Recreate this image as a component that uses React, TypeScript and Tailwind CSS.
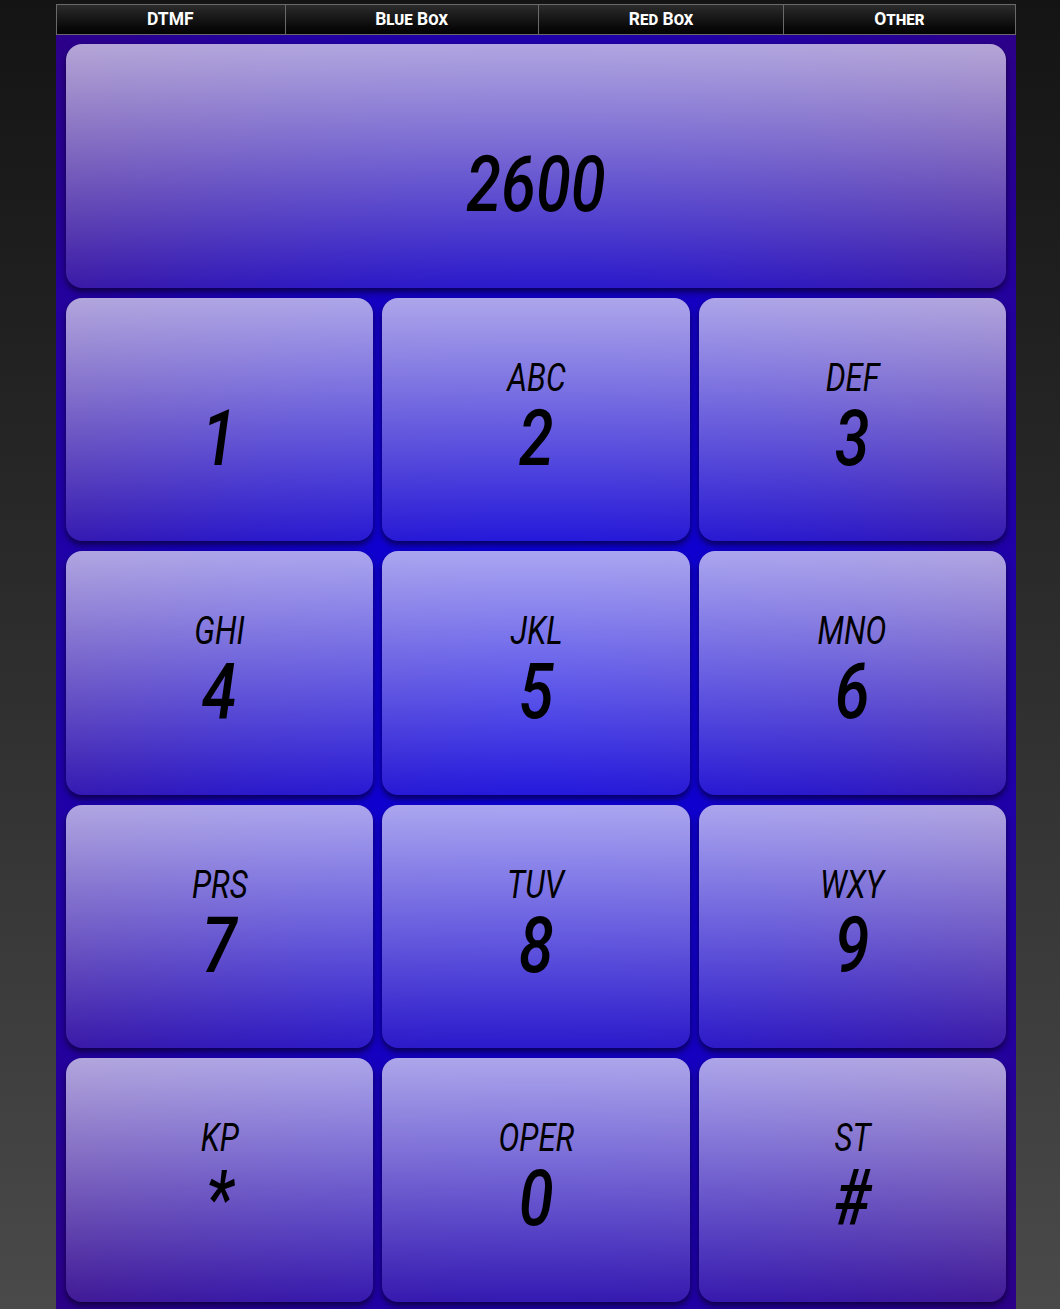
const tabs = [
    { label: 'DTMF', width: 'w-[228px]' },
    { label: 'Blue Box', width: 'w-[254px]' },
    { label: 'Red Box', width: 'w-[246px]' },
    { label: 'Other', width: 'w-[232px]' },
];

const keys = [
    { digit: '1', letters: '' },
    { digit: '2', letters: 'ABC' },
    { digit: '3', letters: 'DEF' },
    { digit: '4', letters: 'GHI' },
    { digit: '5', letters: 'JKL' },
    { digit: '6', letters: 'MNO' },
    { digit: '7', letters: 'PRS' },
    { digit: '8', letters: 'TUV' },
    { digit: '9', letters: 'WXY' },
    { digit: '*', letters: 'KP' },
    { digit: '0', letters: 'OPER' },
    { digit: '#', letters: 'ST' },
];

const Key = ({ digit, letters, wide }: { digit: string; letters: string; wide?: boolean }) => {
    return (
        <div
            className={`flex h-[243.5px] flex-col items-center rounded-2xl bg-gradient-to-b from-white/65 to-white/10 pt-[58px] text-black shadow-[0_4px_6px_rgba(0,0,0,0.55)] ${wide ? 'col-span-3' : ''}`}
        >
            <div className="h-[44px] scale-x-[0.8] text-[39px] leading-[44px] italic">{letters}</div>
            <div className="h-[78px] scale-x-[0.82] text-[77px] leading-[78px] font-medium italic">{digit}</div>
        </div>
    );
};

export default function App() {
    return (
        <div className="min-h-screen bg-gradient-to-b from-[#141414] to-[#4a4a4a] pt-[4px] font-['Roboto',sans-serif]">
            <div className="ml-[56px] w-[960px]">
                <nav className="flex h-[31px] border border-[#6a6a6a]">
                    {tabs.map((tab, i) => (
                        <div
                            key={tab.label}
                            className={`flex ${tab.width} items-center justify-center bg-gradient-to-b from-[#2c2c2c] to-[#030303] ${i > 0 ? 'border-l border-[#6a6a6a]' : ''}`}
                        >
                            <span className="scale-x-[0.92] text-[19px] font-bold text-white [font-variant-caps:small-caps]">
                                {tab.label}
                            </span>
                        </div>
                    ))}
                </nav>
                <main className="grid grid-cols-3 gap-x-[9px] gap-y-[10px] bg-[radial-gradient(ellipse_at_center,#0a00e0_0%,#1400c4_45%,#2c0088_100%)] px-[10px] pt-[9px] pb-[10px]">
                    <Key digit="2600" letters="" wide />
                    {keys.map((k) => (
                        <Key key={k.digit} digit={k.digit} letters={k.letters} />
                    ))}
                </main>
            </div>
        </div>
    );
}
